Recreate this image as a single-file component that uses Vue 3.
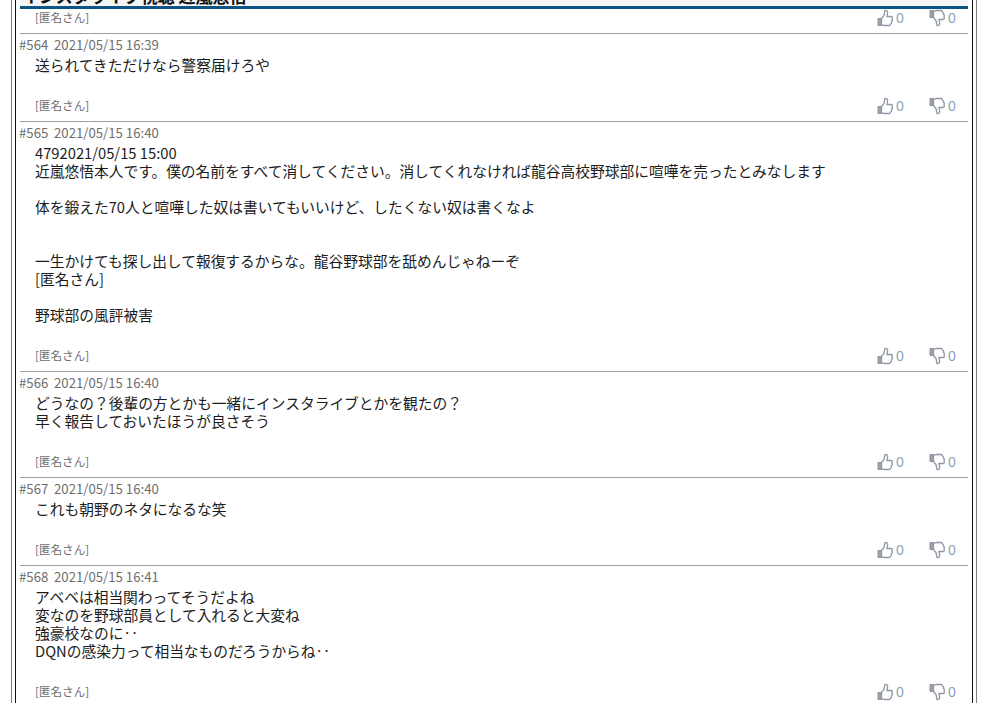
<script setup>
const posts = [
  { id: 564, date: '2021/05/15 16:39', lines: ['送られてきただけなら警察届けろや'], h: 88 },
  { id: 565, date: '2021/05/15 16:40', lines: ['4792021/05/15 15:00', '近嵐悠悟本人です。僕の名前をすべて消してください。消してくれなければ龍谷高校野球部に喧嘩を売ったとみなします', '', '体を鍛えた70人と喧嘩した奴は書いてもいいけど、したくない奴は書くなよ', '', '', '一生かけても探し出して報復するからな。龍谷野球部を舐めんじゃねーぞ', '[匿名さん]', '', '野球部の風評被害'], h: 250 },
  { id: 566, date: '2021/05/15 16:40', lines: ['どうなの？後輩の方とかも一緒にインスタライブとかを観たの？', '早く報告しておいたほうが良さそう'], h: 106 },
  { id: 567, date: '2021/05/15 16:40', lines: ['これも朝野のネタになるな笑'], h: 88 },
  { id: 568, date: '2021/05/15 16:41', lines: ['アベベは相当関わってそうだよね', '変なのを野球部員として入れると大変ね', '強豪校なのに‥', 'DQNの感染力って相当なものだろうからね‥'], h: 142 }
]
</script>

<template>
  <div class="frame">
    <div class="inner">
      <div class="head"><span class="title">インスタライブ視聴 近嵐悠悟</span></div>
      <div class="row first">
        <div class="foot">
          <span class="name">[匿名さん]</span>
          <div class="votes">
            <span class="vote"><svg class="ic" viewBox="0 0 16 18"><path d="M1 9.5h3.5v7H1z" fill="#a3a3a3" stroke="#8f8f8f"/><path d="M4.5 9.5 7 6.500 8 1.500c2-.5 3 1 2.500 3L10 7.500h4c1.500 0 1.500 1.500 1 2.500.5 1 .5 2-.5 2.500.3 1 0 2-1 2.500 0 1-.5 1.500-1.500 1.500H7.500l-3-1z" fill="#fff" stroke="#8b97a6" stroke-width="1.300"/></svg><span class="num">0</span></span>
            <span class="vote"><svg class="ic" viewBox="0 0 16 18"><path d="M1 1.500h3.500v7H1z" fill="#a3a3a3" stroke="#8f8f8f"/><path d="M4.500 8.500 7 11.500l1 5c2 .5 3-1 2.500-3l-.5-3h4c1.500 0 1.500-1.500 1-2.500.5-1 .5-2-.5-2.500.3-1 0-2-1-2.500 0-1-.5-1.500-1.500-1.500H7.500l-3 1z" fill="#fff" stroke="#8b97a6" stroke-width="1.300"/></svg><span class="num">0</span></span>
          </div>
        </div>
      </div>
      <div v-for="p in posts" :key="p.id" class="row" :style="{ height: p.h + 'px' }">
        <div class="meta"><span class="pid">#{{ p.id }}</span>{{ p.date }}</div>
        <div class="body">
          <div v-for="(l, i) in p.lines" :key="i" class="line">{{ l }}</div>
        </div>
        <div class="foot">
          <span class="name">[匿名さん]</span>
          <div class="votes">
            <span class="vote"><svg class="ic" viewBox="0 0 16 18"><path d="M1 9.5h3.5v7H1z" fill="#a3a3a3" stroke="#8f8f8f"/><path d="M4.500 9.500 7 6.500 8 1.500c2-.5 3 1 2.500 3L10 7.500h4c1.500 0 1.500 1.500 1 2.500.5 1 .5 2-.5 2.500.3 1 0 2-1 2.500 0 1-.5 1.500-1.500 1.500H7.500l-3-1z" fill="#fff" stroke="#8b97a6" stroke-width="1.300"/></svg><span class="num">0</span></span>
            <span class="vote"><svg class="ic" viewBox="0 0 16 18"><path d="M1 1.500h3.500v7H1z" fill="#a3a3a3" stroke="#8f8f8f"/><path d="M4.500 8.500 7 11.500l1 5c2 .5 3-1 2.500-3l-.5-3h4c1.500 0 1.500-1.500 1-2.500.5-1 .5-2-.5-2.500.3-1 0-2-1-2.500 0-1-.5-1.500-1.500-1.500H7.500l-3 1z" fill="#fff" stroke="#8b97a6" stroke-width="1.300"/></svg><span class="num">0</span></span>
          </div>
        </div>
      </div>
    </div>
  </div>
</template>

<style>
html, body { margin: 0; background: #fff; overflow: hidden; }
</style>

<style scoped>
.frame {
  box-sizing: border-box;
  width: 966px;
  height: 703px;
  margin-left: 11px;
  border-left: 1px solid #808080;
  border-right: 1px solid #808080;
  padding: 0 3px;
  overflow: hidden;
  font-family: "Noto Sans CJK JP", "Liberation Sans", sans-serif;
}
.inner {
  box-sizing: border-box;
  height: 703px;
  border-left: 1px solid #111;
  border-right: 1px solid #111;
  padding: 0 4px;
}
.head {
  height: 6px;
  border-bottom: 3px solid #0b5486;
  background: #f4f4f4;
  overflow: hidden;
  position: relative;
}
.title {
  position: absolute;
  left: 2px;
  top: -14px;
  font-size: 17px;
  line-height: 20px;
  font-weight: bold;
  color: #111;
  white-space: nowrap;
}
.row {
  box-sizing: border-box;
  position: relative;
  border-bottom: 1px solid #a0a0a0;
}
.row.first { height: 25px; }
.meta {
  font-size: 13.2px;
  line-height: 14px;
  padding-top: 4px;
  margin-left: -1px;
  color: #6e6e6e;
  display: flex;
}
.pid { width: 35px; }
.body {
  padding-left: 15px;
  margin-top: 4px;
  font-size: 14.74px;
  line-height: 18px;
  color: #1c1c1c;
}
.line { min-height: 18px; white-space: nowrap; }
.foot {
  position: absolute;
  left: 15px;
  right: 13px;
  bottom: 6px;
  height: 18px;
  display: flex;
  justify-content: space-between;
  align-items: center;
}
.name { font-size: 11.6px; line-height: 14px; color: #6e6e6e; margin-top: -2px; }
.votes { display: flex; gap: 26px; }
.vote { display: flex; align-items: center; gap: 3px; }
.ic { width: 16px; height: 18px; }
.num { font: 14px "Liberation Sans", sans-serif; color: #8ba2bb; width: 7px; }
</style>
